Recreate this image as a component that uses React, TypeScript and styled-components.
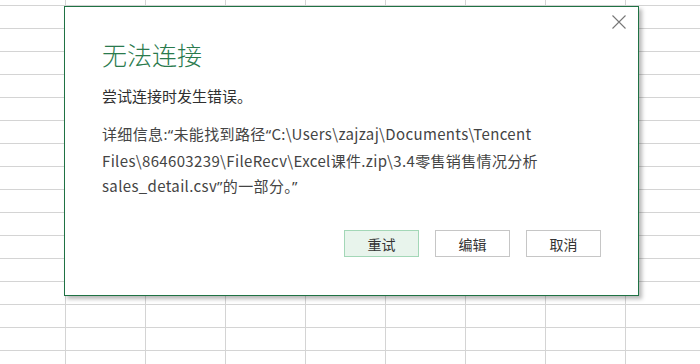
import React from "react";
import styled, { createGlobalStyle } from "styled-components";

const GlobalStyle = createGlobalStyle`
  html, body {
    margin: 0;
    padding: 0;
    background: #fff;
  }
  body {
    font-family: "Segoe UI", "Noto Sans", "Noto Sans CJK SC", sans-serif;
  }
`;

const Sheet = styled.div`
  width: 700px;
  height: 364px;
  box-sizing: border-box;
  padding: 6px 0 0 64px;
  overflow: hidden;
  background-color: #fff;
  background-image: linear-gradient(to right, #d4d4d4 1px, transparent 1px),
    linear-gradient(to bottom, #d4d4d4 1px, transparent 1px);
  background-size: 80px 23px;
  background-position: 65px 5px;
`;

const Dialog = styled.div`
  position: relative;
  width: 575px;
  height: 290px;
  box-sizing: border-box;
  border: 1px solid #1f7244;
  background: #fff;
  box-shadow: 3px 3px 4px rgba(0, 0, 0, 0.28);
  padding: 30px 37px 0 37px;
  display: flex;
  flex-direction: column;
  font-family: "Noto Sans CJK SC", sans-serif;
`;

const CloseButton = styled.button`
  position: absolute;
  top: 8px;
  right: 12px;
  width: 14px;
  height: 14px;
  padding: 0;
  border: none;
  background: none;
  display: flex;
`;

const Title = styled.h1`
  margin: 0;
  font-size: 25px;
  font-weight: 300;
  line-height: 34px;
  color: #2a7a4d;
`;

const Message = styled.p`
  margin: 14px 0 0;
  font-size: 15px;
  line-height: 22px;
  color: #2f2f2f;
`;

const Detail = styled.p`
  margin: 14px 0 0;
  font-size: 15px;
  line-height: 25.5px;
  letter-spacing: 0.35px;
  color: #444;
`;

// narrow Latin quotes and colon, as the original font draws them
const Punct = styled.span`
  font-family: "Noto Sans", sans-serif;
`;

const Buttons = styled.div`
  margin-top: auto;
  margin-bottom: 38px;
  display: flex;
  justify-content: flex-end;
  gap: 16px;
`;

const Button = styled.button<{ $primary?: boolean }>`
  width: 75px;
  height: 27px;
  box-sizing: border-box;
  border: 1px solid ${p => (p.$primary ? "#a3d7b7" : "#c6c6c6")};
  background: ${p => (p.$primary ? "#e8f4ec" : "#fff")};
  font-family: "Noto Sans CJK SC", sans-serif;
  font-size: 14px;
  color: #333;
  padding: 0;
`;

const App: React.FC = () => {
  return (
    <>
      <GlobalStyle />
      <Sheet>
        <Dialog>
          <CloseButton aria-label="关闭">
            <svg width="14" height="14" viewBox="0 0 14 14">
              <path d="M0.5 0.5 L13.5 13.5 M13.5 0.5 L0.5 13.5" stroke="#777" strokeWidth="1.1" fill="none" />
            </svg>
          </CloseButton>
          <Title>无法连接</Title>
          <Message>尝试连接时发生错误。</Message>
          <Detail>
            详细信息<Punct>:“</Punct>未能找到路径<Punct>“</Punct>C:\Users\zajzaj\Documents\Tencent
            <br />
            Files\864603239\FileRecv\Excel课件.zip\3.4零售销售情况分析
            <br />
            sales_detail.csv<Punct>”</Punct>的一部分。<Punct>”</Punct>
          </Detail>
          <Buttons>
            <Button $primary>重试</Button>
            <Button>编辑</Button>
            <Button>取消</Button>
          </Buttons>
        </Dialog>
      </Sheet>
    </>
  );
};

export default App;
